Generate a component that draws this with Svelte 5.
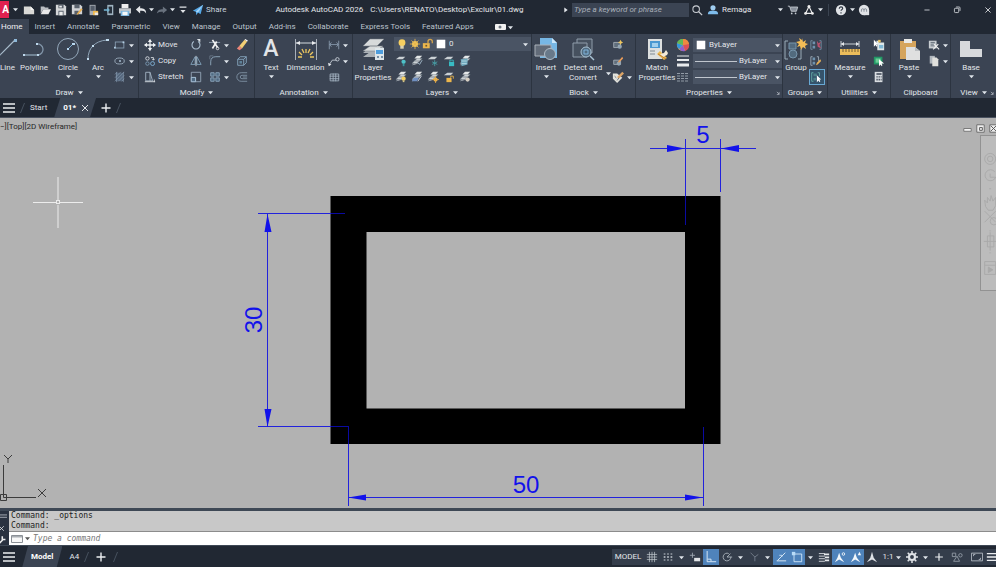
<script lang="ts">
  // Main window: title bar, ribbon, document tabs, drawing area,
  // command line and status bar.
  interface Tool {
    icon: string;
    name: string;
    text?: boolean;
    menu?: boolean;
    on?: boolean;
  }

  // Small glyphs live in a 14x14 box, ribbon-sized ones in 24x24.
  const small: Record<string, string> = {
    caret: '<path d="M4 5.500h6L7 9z" fill="#dfe4ea"/>',
    next: '<path d="M5 4v6l4-3z" fill="#e6e9ee"/>',
    launch: '<path d="M5 5l4 4M9 5.500v4H5" stroke="#d5dae1" fill="none"/>',
    new: '<path d="M1 3h8l4 4v5H1z" fill="#d9d9d6"/><path d="M9 3v4h4" fill="#f5f5f5"/>',
    open: '<path d="M2 3h4l1 1h4v2H5l-3 5z" fill="#b9bdc2"/><path d="M5 6h9l-3 6H2z" fill="#e9e9e9"/>',
    save: '<path d="M1 1h10l2 2v10H1z" fill="#d5d7d9"/><path d="M4 1h6v4H4zM4 8h6v5H4z" fill="#59616c"/><path d="M5 9h4v4H5zM5 2h3v2H5z" fill="#eceded"/>',
    saveas: '<path d="M1 1h10l2 2v9H1z" fill="#d0d2d5"/><path d="M4 1h6v4H4zM4 8h5v4H4z" fill="#59616c"/><path d="M7 11l5-6 1.500 1.500-5 5.500-2 .5z" fill="#e8ad4d"/>',
    web: '<path d="M3 1h7v12H3z" fill="#a8adb4"/><path d="M4 2h5v6H4z" fill="#535c69"/><path d="M7 8h6v5H7z" fill="#edb84f"/><path d="M9 10h4v3H9z" fill="#e7e7e7"/>',
    mobile: '<path d="M5 1h7v12H5z" fill="#9eb2c0"/><path d="M6.500 3h4v8h-4z" fill="#26303c"/><path d="M1 6h4V4l3 3-3 3V8H1z" fill="#74b4d2"/>',
    print: '<path d="M3 0h8v5H3z" fill="#eee"/><path d="M0 5h14v6H0z" fill="#c2c6ca"/><path d="M2 8h10v6H2z" fill="#75b2dd"/><path d="M4 9h6v4H4z" fill="#f3f6f8"/>',
    undo: '<path d="M6 2v3c4 0 7 1 7 6-2-3-4-3-7-3v3L1 6.500z" fill="#e5e7ea"/>',
    redo: '<path d="M8 3v3C4 6 2 7 1 11c2-2 4-2 7-2v2l5-4z" fill="#69727e"/>',
    custom: '<path d="M3 3h8v1.500H3zM4 7h6l-3 3.500z" fill="#e1e4e8"/>',
    share: '<path d="M1 8l12-7-3 11-3-2-2 3-.5-4z" fill="#56a9e8"/><path d="M4.500 9L13 1 7 10z" fill="#a9d6f8"/>',
    search: '<circle cx="6" cy="6" r="3.800" fill="none" stroke="#c9cdd3" stroke-width="1.200"/><path d="M9 9l4 4" stroke="#c9cdd3" stroke-width="1.500"/>',
    user: '<circle cx="7" cy="4.500" r="3" fill="#9fcdf0"/><path d="M1 12c0-3 2-4 4-4h4c2 0 4 1 4 4z" fill="#7ebcec"/>',
    cart: '<path d="M1 2.500h2l2 6h6l1.500-5H4" fill="#868e99" stroke="#c5cad1"/><circle cx="5.500" cy="11" r="1" fill="#c5cad1"/><circle cx="10" cy="11" r="1" fill="#c5cad1"/>',
    autodesk: '<path d="M7 3L3 11h8z" fill="none" stroke="#eee" stroke-width="1.300"/><g fill="#eee"><circle cx="7" cy="3" r="1.800"/><circle cx="3" cy="11" r="1.600"/><circle cx="11" cy="11" r="1.600"/></g>',
    help: '<circle cx="7" cy="7" r="6" fill="#dfe2e6"/><path d="M5 5.500c0-3 4-2.500 4-.5 0 1.500-2 1.500-2 3M7 9.500V11" fill="none" stroke="#29313d" stroke-width="1.300"/>',
    assist: '<circle cx="7" cy="7" r="6" fill="#dfe2e6"/><path d="M7 7h6v6H7z" fill="#dfe2e6"/><path d="M4 9V7a1.500 1.500 0 0 1 3 0v2M7 7a1.500 1.500 0 0 1 3 0v2" fill="none" stroke="#7b838e"/>',
    min: '<path d="M4 7h6" stroke="#d6d9de"/>',
    restore: '<rect x="4" y="5" width="5" height="5" rx="1" fill="none" stroke="#d6d9de"/><path d="M6 3.500h3.500a1 1 0 0 1 1 1V8" fill="none" stroke="#d6d9de"/>',
    close: '<path d="M4 4l6 6M10 4l-6 6" stroke="#e3e5e8"/>',
    burger: '<path d="M1 3h12M1 7h12M1 11h12" stroke="#eceef1" stroke-width="1.500"/>',
    plus: '<path d="M7 2.500v9M2.500 7h9" stroke="#eceef1" stroke-width="1.400"/>',
    rect: '<rect x="1.500" y="3.500" width="10" height="7" fill="none" stroke="#8ba0b5"/><g fill="#b3cee4"><path d="M0 9h2v2H0zM10 3h2v2h-2z"/></g>',
    ellipse: '<ellipse cx="6.500" cy="7" rx="5.500" ry="3.500" fill="none" stroke="#a2b3c3"/><path d="M6 6h2v2H6z" fill="#bbd2e6"/>',
    hatch: '<path d="M2 2h9v10H2z" fill="#55677d"/><path d="M1 4L4 1M1 8l7-7M1 12L12 1M5 12l7-7M9 12l3-3M3 1v12M11 1v12" stroke="#91a4b8" stroke-width=".6"/>',
    move: '<path d="M7 1v12M1 7h12" stroke="#eceff2" stroke-width="1.500"/><path d="M4.500 3.500L7 0l2.500 3.500zM4.500 10.500L7 14l2.500-3.500zM3.500 4.500L0 7l3.500 2.500zM10.500 4.500L14 7l-3.500 2.500z" fill="#eceff2"/>',
    copy: '<g fill="none"><circle cx="4" cy="4" r="2" stroke="#dce1e6"/><circle cx="4" cy="10" r="2" stroke="#7c9db8"/><circle cx="10" cy="10" r="2.300" stroke="#82b4d9"/><path d="M8 3h3v3M9.500 4.500L11 6l1.500-1.500" stroke="#dce1e6"/></g>',
    stretch: '<path d="M2 1.500h5v10H2zM7 1.500l3 10H7" fill="none" stroke="#a9b9c9"/><path d="M1 12.500h12M12 10v3" stroke="#dce2e8"/>',
    rotate: '<path d="M9.500 3a4.700 4.700 0 1 1-5 0" fill="none" stroke="#a9bccd" stroke-width="1.300"/><path d="M8 0h4v4z" fill="#d9dee3"/>',
    mirror: '<path d="M6 2v9H1zM8 2v9h5z" fill="none" stroke="#83a5bf"/><path d="M7 1v12" stroke="#cad4dd"/>',
    scale: '<path d="M1.500 1.500h11v11h-11zM1.500 7.500h5v5" fill="none" stroke="#98aabc"/><path d="M1.500 7.500h5v5h-5z" fill="#4f6a83" stroke="#abc5da"/>',
    trim: '<path d="M0 4h13" stroke="#98a7b6"/><path d="M4 1l6 9M9 3L4 11" stroke="#f1f1f1" stroke-width="2"/><circle cx="10" cy="11" r="1.500" fill="none" stroke="#f1f1f1"/>',
    fillet: '<path d="M2 12V8c0-4 2-6 6-6h5" fill="none" stroke="#94afc5"/><path d="M1 1h4M1 1v4" stroke="#697889"/>',
    array: '<path d="M2 2h4v4H2zM8 2h4v4H8zM2 8h4v4H2zM8 8h4v4H8z" fill="#506a82" stroke="#8faac0"/>',
    erase: '<path d="M1 11l3 2 3-2-3-3z" fill="#ec8579"/><path d="M4 8l6-7 3 2-6 8z" fill="#f3cf74"/><path d="M10 1l1-1 3 2-1 1z" fill="#fff"/>',
    explode: '<path d="M2 5h7v7H2zM5 2h7v7" fill="none" stroke="#8aabc5"/><path d="M2 5l3-3M9 5l3-3M9 12l3-3" stroke="#8aabc5"/><path d="M4 7h3v3H4z" fill="#5f8299"/>',
    offset: '<path d="M13 2H6a5 5 0 0 0 0 10h7M13 5H7a2 2 0 0 0 0 4h6M13 7H8" fill="none" stroke="#8396a9"/>',
    linear: '<path d="M1.500 2v10M12.500 2v10M2 6.500h10M4 4L2 6.500 4 9M10 4l2 2.500L10 9" fill="none" stroke="#8a9caf"/>',
    leader: '<path d="M1 12l4-6h5" fill="none" stroke="#cbd3dc"/><circle cx="11" cy="5" r="2" fill="none" stroke="#cbd3dc"/><path d="M0 9l1 4 3-2z" fill="#e2e6ea"/>',
    table: '<path d="M2.500 3.500h10v8h-10zM2 6h11M2 9h11M6 3v9M9 3v9" fill="none" stroke="#a4b3c2"/>',
    bulb: '<circle cx="7" cy="5.500" r="4" fill="#f6cf60"/><path d="M5 9h4v3.500H5z" fill="#ddd3b0"/>',
    sun: '<circle cx="7" cy="7" r="3.500" fill="#f7cb5b"/><path d="M7 1v12M1 7h12M3 3l8 8M11 3l-8 8" stroke="#e5b54e"/>',
    lock: '<path d="M1 6h8v6H1z" fill="#ebb64d"/><path d="M7 6V4a2.500 2.500 0 0 1 5 0v2" fill="none" stroke="#d7a44b" stroke-width="1.500"/><path d="M4 8h2v2H4z" fill="#6b5630"/>',
    white: '<path d="M2 2h10v10H2z" fill="#fff"/>',
    insertEdit: '<path d="M2 4h8v6H2z" fill="#606e7c" stroke="#a6afb8"/><circle cx="9" cy="9" r="2.500" fill="#93a5b3"/><path d="M10 1l1 2 2 1-2 1-1 2-1-2-2-1 2-1z" fill="#eec55e"/>',
    blockEdit: '<path d="M2 6h8v5H2z" fill="#606e7c" stroke="#a6afb8"/><circle cx="8" cy="10" r="2.500" fill="#93a5b3"/><path d="M7 8l5-6 1 2-5 5z" fill="#ed9d58"/>',
    attrib: '<path d="M1 3h5l6 5-6 6-5-5z" fill="#e2e2dc"/><path d="M6 7l6-6 2 2-6 6z" fill="#dca466"/><path d="M3 6l2 2M8 8l-2 3" stroke="#5c6570"/>',
    wheel: '<circle cx="7" cy="7" r="6" fill="#e7b63c"/><path d="M7 7V1a6 6 0 0 1 6 5z" fill="#ee8841"/><path d="M7 7l6-1a6 6 0 0 1-4 7z" fill="#dc4e57"/><path d="M7 7l2 6a6 6 0 0 1-6-2z" fill="#8f60cc"/><path d="M7 7l-4 4a6 6 0 0 1-2-6z" fill="#3597dc"/><path d="M7 7L1 5a6 6 0 0 1 6-4z" fill="#62b657"/>',
    weight: '<path d="M1 2h12" stroke="#e9ebed"/><path d="M1 6h12" stroke="#e9ebed" stroke-width="2"/><path d="M1 11h12" stroke="#e9ebed" stroke-width="3"/>',
    ltype: '<path d="M1 3.500h12M1 6h12M1 8.500h12M1 11h12" stroke="#929ba6" stroke-dasharray="3 1"/>',
    ungroup: '<path d="M3 2H1v10h2M11 2h2v10h-2" fill="none" stroke="#7994a9"/><path d="M3 3h3v3H3zM3 8h3v3H3z" fill="#6f92ad"/><path d="M8 2l2 3 3-2-2 4 2 4-4-2z" fill="#b9526f"/>',
    groupEdit: '<path d="M3 2H1v10h2M8 2h2v5" fill="none" stroke="#a5b2be"/><path d="M3 3h3v3H3zM3 8h3v3H3z" fill="#6f92ad"/><path d="M7 12l1-3 4-4 1 2-4 4z" fill="#e5af58"/>',
    groupSel: '<path d="M4 2H2v10h2M9 2h2v4" fill="none" stroke="#68b3aa"/><path d="M4 3h4v3H4zM4 8h3v3H4z" fill="#4d8287"/><path d="M8 5v8l2-2 1 2 1-1-1-2h2z" fill="#fff"/>',
    pick: '<path d="M4 2h3v2h6v9H5V6H4z" fill="#dfe8e9"/><path d="M7 7h5v4H7z" fill="#80b8d5"/><path d="M1 1v8l2-2 1 2 1-1-1-2h2z" fill="#fff"/><path d="M6 1h3v3H6z" fill="#e8c463"/>',
    selectAll: '<path d="M1 2h10v9H1z" fill="#239866"/><path d="M3 4h6v5H3z" fill="#6acc96"/><path d="M7 5v8l2-2 1 2 1-1-1-2h3z" fill="#fff"/>',
    calc: '<path d="M2 1h9v12H2z" fill="#d9dde1"/><path d="M4 2.500h6v2H4zM4 6h1.500v1.500H4zM6.500 6H8v1.500H6.500zM9 6h1v1.500H9zM4 9h1.500v2H4zM6.500 9H8v2H6.500zM9 9h1v2H9z" fill="#3d4654"/>',
    cut: '<path d="M1 2h9v9H1z" fill="#c9ced2"/><path d="M3 4h5M3 6h5M3 8h5" stroke="#59636f"/><path d="M7 6l6 6M12 6l-6 6" stroke="#f2f2f2" stroke-width="1.300"/>',
    copyclip: '<path d="M2 1h6v9H2z" fill="#aeb5bc"/><path d="M5 3h5l2 2v8H5z" fill="#e0e0dd"/>',
    grid: '<path d="M4 1v12M7 1v12M10 1v12M1 4h12M1 7h12M1 10h12" stroke="#c8ced5" stroke-width=".8"/>',
    snap: '<g fill="#c8ced5"><path d="M2 3h2v1H2zM6 3h2v1H6zM10 3h2v1h-2zM2 6h2v2H2zM6 6h2v2H6zM10 6h2v2h-2zM2 10h2v1H2zM6 10h2v1H6zM10 10h2v1h-2z"/></g>',
    dyn: '<path d="M4 2v6M1 5h6" stroke="#a2abb5"/><path d="M6 8h7v4H6z" fill="#e1e4e7"/>',
    ortho: '<path d="M2.500 0v12.500H13M3 9.500h4V12" fill="none" stroke="#e9f3fb"/>',
    polar: '<path d="M11.500 7A4.500 4.500 0 1 1 9 3M7 7h6M7 7l4-4" fill="none" stroke="#aeb6bf"/>',
    iso: '<path d="M3 2l5 5v5M8 7l4-3" fill="none" stroke="#78828f"/>',
    track: '<path d="M2 11.500h11M3 11l9-9" stroke="#eef6fc" fill="none"/><path d="M5 5h3v2" stroke="#d0e4f5" fill="none"/>',
    osnap: '<path d="M3.500 3.500h9v9h-9z" fill="none" stroke="#d8ebfa"/><path d="M1 1h4v4H1z" fill="#b9dcf8"/>',
    lwt: '<path d="M1 3h7M1 6h7M1 9h7M1 12h7" stroke="#e4e7ea"/><path d="M7 4h6M8 7.500h5M8 11h5" stroke="#e4e7ea" stroke-width="2"/>',
    ann: '<path d="M7 1l2 7 4 5-6-3-6 3 4-5z" fill="#dfe2e6"/>',
    annVis: '<path d="M6 2l2 6 4 5-6-3-5 3 3-5z" fill="#f3f8fc"/><circle cx="11" cy="3.500" r="1.500" fill="none" stroke="#f3f8fc"/>',
    annAuto: '<path d="M6 2l2 6 4 5-6-3-5 3 3-5z" fill="#f3f8fc"/><path d="M11 1l-2 4h4z" fill="#f3f8fc"/>',
    gear: '<circle cx="7" cy="7" r="3.500" fill="none" stroke="#e0e3e7" stroke-width="2.500"/><path d="M7 0v3M7 11v3M0 7h3M11 7h3M2 2l2 2M10 10l2 2M12 2l-2 2M2 12l2-2" stroke="#e0e3e7" stroke-width="1.800"/>',
    isolate: '<path d="M1.500 2.500h4v4h-4zM7 6l-4 6h7z" fill="none" stroke="#969faa"/><circle cx="11" cy="5" r="2" fill="none" stroke="#969faa"/>',
    clean: '<path d="M.5 2.500h13v9H.5zM3 6V4h2M11 8v2H9" fill="none" stroke="#bac1c9"/>',
    prompt: '<path d="M.5 3.500h11v7H.5z" fill="#f8f8f8" stroke="#8b9096"/><path d="M1 4h10v1.500H1z" fill="#a8adb2"/>',
    grip: '<path d="M0 5h14M0 8h14" stroke="#c2c7ce"/>',
    wrench: '<path d="M3 13l6-6M8 3v4h4" fill="none" stroke="#eee" stroke-width="2"/>',
    media: '<rect x="1" y="4" width="11" height="6" rx="1" fill="#f2f2f2"/><circle cx="6" cy="7" r="1.500" fill="#6e7681"/>',
    vpMin: '<path d="M3 7h8v3H3z" fill="#f2f2f2" stroke="#747474"/>',
    vpMax: '<path d="M3 3h8v8H3z" fill="#eee" stroke="#686868"/><path d="M6 6h3v3H6z" fill="none" stroke="#555"/>',
    vpClose: '<path d="M3 3h8v8H3z" fill="#eee" stroke="#686868"/><path d="M4 4l6 6M10 4l-6 6" stroke="#555"/>'
  };

  // Layer tools share the sheet stack and differ in their badge.
  const sheets =
    '<path d="M4 7l3-3h6l-3 3zM1 10l3-3h6l-3 3zM1 12l3-2h5" fill="#cbd1d5" stroke="#727d87" stroke-width=".5"/><path d="M4 4l3-3h6l-3 3z" fill="#e4e7e8"/>';
  const sheet = '<path d="M1 5l4-3h7L9 5z" fill="#cbd1d5"/>';
  small.layoff = sheet + '<circle cx="10" cy="8" r="2.500" fill="#4fc1c8"/><path d="M9 10h2v3H9z" fill="#3a929b"/>';
  small.laycur = sheets + '<path d="M8 9l2 2 3-5" fill="none" stroke="#abc2d3"/>';
  small.layfrz = sheet + '<path d="M9 6v7M6 8l6 3M12 8l-6 3" stroke="#499fa7"/>';
  small.laylck = sheet + '<path d="M7 8h6v5H7z" fill="#38bbc3"/><path d="M8 8V6h4v2" fill="none" stroke="#38bbc3"/>';
  small.laymch = sheets + '<path d="M2 5l8-1v7l-7 2z" fill="#71a9bd"/><path d="M3 7h6M3 10h6" stroke="#b9dbe5"/>';
  small.layon = sheets + '<circle cx="10" cy="9" r="2.500" fill="#f3cf62"/><path d="M9 11h2v2H9z" fill="#d4c489"/>';
  small.layiso = sheets + '<path d="M3 8h6l-2 4H1z" fill="#6f8fc1"/><path d="M8 12l4-6" stroke="#dce3ef"/>';
  small.laythw = sheets + '<circle cx="10" cy="10" r="2.500" fill="#efb84e"/><path d="M10 6v8M6 10h8" stroke="#e7aa46"/>';
  small.layulk = sheet + '<path d="M4 8h6v5H4z" fill="#ecb64c"/><path d="M9 8V6h3v3" fill="none" stroke="#ecb64c"/>';
  small.laywlk = sheets + '<circle cx="10" cy="10" r="2.500" fill="#d6cfc3"/>';

  const large: Record<string, string> = {
    line: '<path d="M2 20L19 3" stroke="#a9bdcd" stroke-width="1.200"/><path d="M18 2h3v3h-3zM0 19h3v3H0z" fill="#8fb8d8"/>',
    pline: '<path d="M2 18h14a5.500 5.500 0 0 0-1-11" fill="none" stroke="#8296a9" stroke-width="1.300"/><path d="M1 17h2v2H1zM15 17h2v2h-2zM14 6h2v2h-2z" fill="#bed8ec"/>',
    circle: '<circle cx="12" cy="12" r="10.500" fill="none" stroke="#93a7ba"/><path d="M12 12l6-6" stroke="#7db1d8"/><path d="M11 11h2v2h-2zM16 6h3v2h-3z" fill="#b9d9f1"/>',
    arc: '<path d="M2 22C2 12 8 4 21 3" fill="none" stroke="#8fa4b7"/><path d="M1 21h2v2H1zM6 8h2v2H6zM20 2h3v2h-3z" fill="#c3ddef"/>',
    dim: '<path d="M1.500 2v21M22.500 2v21" stroke="#a8b0ba"/><path d="M2 6h20" stroke="#d6dbe0"/><path d="M2 6l4-2v4zM22 6l-4-2v4z" fill="#e9ebed"/><path d="M12 12v4M5 15l3 3M19 15l-3 3M8 12l2 4M16 12l-2 4M4 20h4M20 20h-4" stroke="#edc75f" stroke-width="1.300"/>',
    layers: '<path d="M2 20l7-5h14l-7 5zM2 16l7-6h14l-7 6z" fill="#aab0b5"/><path d="M2 14l7-5h13l-7 5zM2 9l7-7h14l-7 7z" fill="#d7dadb" stroke="#707881" stroke-width=".5"/><path d="M14 11h9v12h-9z" fill="#dde6eb"/><path d="M15 13h7v4h-7z" fill="#4d9ddd"/><path d="M16 19h2v2h-2zM20 19h2v2h-2z" fill="#758ea4"/>',
    insert: '<path d="M6 1h12l5 5v15H6z" fill="#77b7e5"/><path d="M18 1v5h5" fill="#cbe7fb"/><path d="M1 8h16v11H1z" fill="#626b78" stroke="#aab1b9"/><circle cx="16" cy="17" r="5.500" fill="#68798a" stroke="#b1bcc6"/>',
    detect: '<path d="M6 2h15v14H6z" fill="#46515f" stroke="#8f9dab"/><path d="M2 6h14v14H2z" fill="#46515f" stroke="#8f9dab"/><circle cx="15" cy="15" r="5" fill="#526c81" stroke="#a9c3d5"/><path d="M13 13h4v4h-4z" fill="none" stroke="#7fb2da"/><path d="M19 19l4 4" stroke="#a9c3d5" stroke-width="1.500"/>',
    match: '<path d="M3 2h14v20H3z" fill="#dde0e0"/><path d="M5 4h10v7H5z" fill="#4b98d1"/><path d="M7 6h6v4H7z" fill="#a3d0ed"/><path d="M5 14h5M5 17h5" stroke="#7f8992"/><path d="M12 17l3-3 7 7-3 2z" fill="#eeb94d"/><path d="M15 17l4-1 2-3 2 3-1 2-4 2z" fill="#f3ead8"/><path d="M13 17l8 5" stroke="#bf813a"/>',
    group: '<path d="M4 4H1v18h3M14 22h3V12" fill="none" stroke="#9aabb8"/><path d="M5 6h7v6H5z" fill="#526a7e" stroke="#7795ac"/><circle cx="9" cy="17" r="4" fill="#526a7e" stroke="#7795ac"/><path d="M18 1l1 4 3-2-1 3 3 1-3 2 1 3-3-2-2 3-1-4-3 1 2-3-3-2 4-1-1-3 3 2z" fill="#f4bd56"/>',
    measure: '<path d="M3 7h18M3 4v6M21 4v6" stroke="#cbd1d7"/><path d="M3 7l3-2v4zM21 7l-3-2v4z" fill="#e5e9ec"/><path d="M2 12h20v6H2z" fill="#ebbd5b"/><path d="M5 12v3M8 12v3M11 12v3M14 12v3M17 12v3M20 12v3" stroke="#775f32"/>',
    paste: '<path d="M3 4h16v18H3z" fill="#d5a45c"/><path d="M7 2h8v4H7z" fill="#e9e9e7"/><path d="M9 10h9l5 4v9H9z" fill="#dfe0e0"/><path d="M18 10v4h5" fill="#b9bdc0"/>',
    base: '<path d="M1 4h10v8h12v8H1z" fill="#d7d9dc"/>'
  };

  const quick: Tool[] = [
    { icon: 'new', name: 'New' },
    { icon: 'open', name: 'Open' },
    { icon: 'save', name: 'Save' },
    { icon: 'saveas', name: 'Save As' },
    { icon: 'web', name: 'Open from Web' },
    { icon: 'mobile', name: 'Save to Web' },
    { icon: 'print', name: 'Plot' },
    { icon: 'undo', name: 'Undo', menu: true },
    { icon: 'redo', name: 'Redo', menu: true }
  ];

  const ribbonTabs = [
    'Home', 'Insert', 'Annotate', 'Parametric', 'View', 'Manage',
    'Output', 'Add-ins', 'Collaborate', 'Express Tools', 'Featured Apps'
  ];

  const drawTools: Tool[] = [
    { icon: 'rect', name: 'Rectangle', menu: true },
    { icon: 'ellipse', name: 'Ellipse', menu: true },
    { icon: 'hatch', name: 'Hatch', menu: true }
  ];
  const modifyTools: Tool[][] = [
    [
      { icon: 'move', name: 'Move', text: true },
      { icon: 'copy', name: 'Copy', text: true },
      { icon: 'stretch', name: 'Stretch', text: true }
    ],
    [
      { icon: 'rotate', name: 'Rotate' },
      { icon: 'mirror', name: 'Mirror' },
      { icon: 'scale', name: 'Scale' }
    ],
    [
      { icon: 'trim', name: 'Trim', menu: true },
      { icon: 'fillet', name: 'Fillet', menu: true },
      { icon: 'array', name: 'Array', menu: true }
    ],
    [
      { icon: 'erase', name: 'Erase' },
      { icon: 'explode', name: 'Explode' },
      { icon: 'offset', name: 'Offset' }
    ]
  ];
  const annotationTools: Tool[] = [
    { icon: 'linear', name: 'Linear', menu: true },
    { icon: 'leader', name: 'Leader', menu: true },
    { icon: 'table', name: 'Table' }
  ];
  const layerTools = [
    'layoff', 'laycur', 'layfrz', 'laylck', 'laymch',
    'layon', 'layiso', 'laythw', 'layulk', 'laywlk'
  ];
  const blockTools: Tool[] = [
    { icon: 'insertEdit', name: 'Create block' },
    { icon: 'blockEdit', name: 'Edit block' },
    { icon: 'attrib', name: 'Edit attributes', menu: true }
  ];
  const groupTools: Tool[] = [
    { icon: 'ungroup', name: 'Ungroup' },
    { icon: 'groupEdit', name: 'Group edit' },
    { icon: 'groupSel', name: 'Group selection', on: true }
  ];
  const utilityTools: Tool[] = [
    { icon: 'pick', name: 'Quick select' },
    { icon: 'selectAll', name: 'Select all' },
    { icon: 'calc', name: 'Calculator' }
  ];
  const clipTools: Tool[] = [
    { icon: 'cut', name: 'Cut', menu: true },
    { icon: 'copyclip', name: 'Copy clip', menu: true }
  ];

  const statusTools: Tool[] = [
    { icon: 'grid', name: 'Grid' },
    { icon: 'snap', name: 'Snap', menu: true },
    { icon: 'dyn', name: 'Dynamic input' },
    { icon: 'ortho', name: 'Ortho', on: true },
    { icon: 'polar', name: 'Polar tracking', menu: true },
    { icon: 'iso', name: 'Isometric drafting', menu: true },
    { icon: 'track', name: 'Object snap tracking', on: true },
    { icon: 'osnap', name: 'Object snap', on: true, menu: true },
    { icon: 'lwt', name: 'Lineweight' },
    { icon: 'annVis', name: 'Annotation visibility', on: true },
    { icon: 'annAuto', name: 'Auto scale', on: true },
    { icon: 'ann', name: 'Annotation scale' }
  ];

  let activeTab = $state('Home');
  let command = $state('');
</script>

{#snippet ico(name: string)}
  <svg class="ico" viewBox="0 0 14 14" aria-hidden="true">{@html small[name]}</svg>
{/snippet}

{#snippet caret()}
  <svg class="caret" viewBox="4 4 6 6" aria-hidden="true">{@html small.caret}</svg>
{/snippet}

{#snippet big(name: string, lines: string[], menu: boolean)}
  <button type="button" class="big">
    {#if name === 'text'}
      <span class="letter">A</span>
    {:else}
      <svg class="bigico" viewBox="0 0 24 24" aria-hidden="true">{@html large[name]}</svg>
    {/if}
    {#each lines as l}<span>{l}</span>{/each}
    {#if menu}{@render caret()}{/if}
  </button>
{/snippet}

{#snippet stack(tools: Tool[])}
  <div class="stack">
    {#each tools as t}
      <button type="button" class="tool" class:on={t.on} aria-label={t.name}>
        {@render ico(t.icon)}
        {#if t.text}<span>{t.name}</span>{/if}
        {#if t.menu}{@render caret()}{/if}
      </button>
    {/each}
  </div>
{/snippet}

{#snippet caption(text: string, menu: boolean, launch: boolean)}
  <footer class="caption">
    <span>{text}</span>
    {#if menu}{@render caret()}{/if}
    {#if launch}<span class="launch">{@render ico('launch')}</span>{/if}
  </footer>
{/snippet}

<div class="app">
  <header class="titlebar">
    <button type="button" class="logo">A</button>
    <button type="button" class="drop" aria-label="Application menu">{@render caret()}</button>
    <div class="quick">
      {#each quick as q}
        <button type="button" class="tb" aria-label={q.name}>{@render ico(q.icon)}</button>
        {#if q.menu}{@render caret()}{/if}
      {/each}
      <button type="button" class="tb" aria-label="Customize">{@render ico('custom')}</button>
    </div>
    <button type="button" class="share">{@render ico('share')}<span>Share</span></button>
    <h1><span>Autodesk AutoCAD 2026</span><span>C:\Users\RENATO\Desktop\Excluir\01.dwg</span></h1>
    <div class="account">
      {@render ico('next')}
      <input type="search" aria-label="Search help" placeholder="Type a keyword or phrase" />
      <button type="button" class="tb" aria-label="Search">{@render ico('search')}</button>
      <button type="button" class="user">{@render ico('user')}<span>Remaga</span>{@render caret()}</button>
      <button type="button" class="tb" aria-label="Store">{@render ico('cart')}</button>
      <button type="button" class="tb" aria-label="Autodesk apps">{@render ico('autodesk')}</button>
      {@render caret()}
      <i class="rule"></i>
      <button type="button" class="tb" aria-label="Help">{@render ico('help')}</button>
      {@render caret()}
      <button type="button" class="tb" aria-label="Assistant">{@render ico('assist')}</button>
    </div>
    <div class="window">
      <button type="button" aria-label="Minimize">{@render ico('min')}</button>
      <button type="button" aria-label="Restore">{@render ico('restore')}</button>
      <button type="button" aria-label="Close">{@render ico('close')}</button>
    </div>
  </header>

  <nav class="tabs">
    {#each ribbonTabs as tab}
      <button type="button" class:active={activeTab === tab} onclick={() => (activeTab = tab)}>{tab}</button>
    {/each}
    <button type="button" class="display" aria-label="Ribbon display">{@render ico('media')}{@render caret()}</button>
  </nav>

  <main class="ribbon">
    <section class="panel draw">
      <div class="tools">
        {@render big('line', ['Line'], false)}
        {@render big('pline', ['Polyline'], false)}
        {@render big('circle', ['Circle'], true)}
        {@render big('arc', ['Arc'], true)}
        {@render stack(drawTools)}
      </div>
      {@render caption('Draw', true, false)}
    </section>
    <section class="panel modify">
      <div class="tools">
        {#each modifyTools as col}{@render stack(col)}{/each}
      </div>
      {@render caption('Modify', true, false)}
    </section>
    <section class="panel annotation">
      <div class="tools">
        {@render big('text', ['Text'], true)}
        {@render big('dim', ['Dimension'], false)}
        {@render stack(annotationTools)}
      </div>
      {@render caption('Annotation', true, false)}
    </section>
    <section class="panel layer">
      <div class="tools">
        {@render big('layers', ['Layer', 'Properties'], false)}
        <div class="layerbox">
          <label class="combo">
            {@render ico('bulb')}{@render ico('sun')}{@render ico('lock')}{@render ico('white')}
            <select aria-label="Current layer"><option>0</option></select>
            {@render caret()}
          </label>
          <div class="layergrid">
            {#each layerTools as t}
              <button type="button" class="tool" aria-label={t}>{@render ico(t)}</button>
            {/each}
          </div>
        </div>
      </div>
      {@render caption('Layers', true, false)}
    </section>
    <section class="panel block">
      <div class="tools">
        {@render big('insert', ['Insert'], true)}
        {@render big('detect', ['Detect and', 'Convert'], false)}
        <span class="side">{@render caret()}</span>
        {@render stack(blockTools)}
      </div>
      {@render caption('Block', true, false)}
    </section>
    <section class="panel props">
      <div class="tools">
        {@render big('match', ['Match', 'Properties'], false)}
        <div class="rows">
          {#each ['wheel', 'weight', 'ltype'] as kind}
            <div class="row">
              {@render ico(kind)}
              <label class="combo">
                {#if kind === 'wheel'}{@render ico('white')}{:else}<i class="sample"></i>{/if}
                <select class={kind} aria-label={kind}><option>ByLayer</option></select>
                {@render caret()}
              </label>
            </div>
          {/each}
        </div>
      </div>
      {@render caption('Properties', true, true)}
    </section>
    <section class="panel groups">
      <div class="tools">
        {@render big('group', ['Group'], false)}
        {@render stack(groupTools)}
      </div>
      {@render caption('Groups', true, false)}
    </section>
    <section class="panel utilities">
      <div class="tools">
        {@render big('measure', ['Measure'], true)}
        {@render stack(utilityTools)}
      </div>
      {@render caption('Utilities', true, false)}
    </section>
    <section class="panel clipboard">
      <div class="tools">
        {@render big('paste', ['Paste'], true)}
        {@render stack(clipTools)}
      </div>
      {@render caption('Clipboard', false, false)}
    </section>
    <section class="panel view">
      <div class="tools">{@render big('base', ['Base'], true)}</div>
      {@render caption('View', true, true)}
    </section>
  </main>

  <nav class="files">
    <button type="button" class="menu" aria-label="Drawings menu">{@render ico('burger')}</button>
    <i class="slash"></i>
    <button type="button">Start</button>
    <button type="button" class="current"><span>01*</span>{@render ico('close')}</button>
    <button type="button" class="add" aria-label="New drawing">{@render ico('plus')}</button>
    <i class="slash"></i>
  </nav>

  <section class="canvas">
    <!-- drawing units are the viewport's own pixels, y starting below the tabs -->
    <svg class="model" viewBox="0 118 996 390" role="img" aria-label="Frame, 50 by 30, wall 5">
      <path d="M330.500 196h390v248h-390zM366.500 232v176.500H685V232z" fill="#000" fill-rule="evenodd" />
      <g stroke="#2222dc" fill="none">
        <path d="M267.500 214v213M258 213.500h73M258 426.500h73" />
        <path d="M349 497.500h354M348.500 444v62M703.500 444v62" />
        <path d="M650 148.500h106M685.500 139v57M720.500 139v53" />
      </g>
      <g stroke="#0a0aa0" fill="none">
        <path d="M331 213.500h14M331 426.500h18M348.500 427v17M703.500 427v17" />
        <path d="M685.500 196v29" />
      </g>
      <g fill="#1212ea">
        <path d="M267.500 214l-3 18h7zM267.500 427l-3-18h7z" />
        <path d="M348 497.500l18-3v6zM703 497.500l-18-3v6z" />
        <path d="M685 148.500l-18-3.500v7zM721 148.500l18-3.500v7z" />
        <text x="526" y="493" text-anchor="middle">50</text>
        <text x="703" y="143" text-anchor="middle">5</text>
        <text transform="translate(262 320) rotate(-90)" text-anchor="middle">30</text>
      </g>
      <g stroke="#ececec" fill="none">
        <path d="M33 202.500h23M60 202.500h23M58 177v23M58 205v23" />
        <rect x="56.500" y="200.500" width="3" height="3" />
      </g>
      <g class="ucs" stroke="#3c3c3c" fill="none">
        <path d="M3.500 465v32.500H36M.5 494.500h6v6h-6z" />
        <path d="M4 455l4 4 4-4M8 459v4M38 489l8 8M46 489l-8 8" />
      </g>
    </svg>
    <div class="vplabel">−][Top][2D Wireframe]</div>
    <div class="vpbuttons">
      <button type="button" aria-label="Minimize viewport">{@render ico('vpMin')}</button>
      <button type="button" aria-label="Maximize viewport">{@render ico('vpMax')}</button>
      <button type="button" aria-label="Close viewport">{@render ico('vpClose')}</button>
    </div>
    <div class="navbar">
      <svg viewBox="0 0 24 154" aria-hidden="true" fill="none" stroke="#a9a9a9">
        <circle cx="10" cy="18" r="6" /><circle cx="10" cy="18" r="3" />
        <path d="M15 32a6 6 0 1 0 1 6h-6v-4" />
        <path d="M10 50v1M10 96v1M10 120v1" stroke-width="2" />
        <path d="M5 70l-1-7 3 3v-6l3 4 1-6 2 6 3-4v9l-3 5H8zM4 75l12 12M4 87l12-12" />
        <circle cx="14" cy="86" r="4" />
        <path d="M10 98v20M3 108h14M7 102h7v12H7zM4 130h12v14H4zM4 134h12" />
        <path d="M8 136l5 3-5 3z" fill="#a9a9a9" />
      </svg>
    </div>
  </section>

  <section class="command">
    <div class="handle">
      {@render ico('grip')}{@render ico('close')}{@render ico('wrench')}
    </div>
    <div class="console">
      <div class="history"><p>Command: _options</p><p>Command:</p></div>
      <label class="entry">
        {@render ico('prompt')}
        <svg class="caret" viewBox="4 4 6 6" aria-hidden="true"><path d="M4 5.500h6L7 9z" fill="#555" /></svg>
        <input type="text" aria-label="Command" placeholder="Type a command" bind:value={command} />
      </label>
    </div>
  </section>

  <footer class="status">
    <nav class="layouts">
      <button type="button" class="menu" aria-label="Layouts menu">{@render ico('burger')}</button>
      <button type="button" class="current"><span>Model</span></button>
      <button type="button">A4</button>
      <i class="slash"></i>
      <button type="button" class="add" aria-label="New layout">{@render ico('plus')}</button>
      <i class="slash"></i>
    </nav>
    <div class="modes">
      <button type="button" class="space">MODEL</button>
      {#each statusTools as s}
        <button type="button" class="mode" class:on={s.on} aria-label={s.name}>{@render ico(s.icon)}</button>
        {#if s.menu}<span class="open">{@render caret()}</span>{/if}
      {/each}
      <button type="button" class="ratio">1:1{@render caret()}</button>
      <button type="button" class="mode" aria-label="Workspace">{@render ico('gear')}</button>
      <span class="open">{@render caret()}</span>
      <button type="button" class="mode" aria-label="Monitor">{@render ico('plus')}</button>
      <button type="button" class="mode wide" aria-label="Isolate objects">{@render ico('isolate')}</button>
      <button type="button" class="mode wide" aria-label="Clean screen">{@render ico('clean')}</button>
      <button type="button" class="mode end" aria-label="Customization">{@render ico('burger')}</button>
    </div>
  </footer>
</div>

<style>
  :global(body) {
    margin: 0;
  }

  .app {
    --dark: #212833;
    --panel: #3b4453;
    --line: #2c3440;
    display: flex;
    flex-direction: column;
    min-height: 100vh;
    overflow: hidden;
    background: var(--dark);
    color: #e3e6ea;
    font: 8px/10px Roboto, 'Noto Sans', sans-serif;
  }

  button,
  input,
  select {
    margin: 0;
    padding: 0;
    border: 0;
    background: none;
    color: inherit;
    font: inherit;
  }
  button {
    display: flex;
    align-items: center;
    justify-content: center;
    white-space: nowrap;
  }
  .ico {
    flex: none;
    width: 14px;
    height: 14px;
  }
  .caret {
    flex: none;
    width: 5px;
    height: 5px;
  }

  .titlebar {
    display: flex;
    align-items: center;
    height: 19px;
  }
  .titlebar .ico {
    width: 12px;
    height: 12px;
  }
  .logo {
    width: 9px;
    height: 17px;
    justify-content: flex-end;
    background: #e0204f;
    color: #fff;
    font-size: 10px;
    font-weight: 700;
  }
  .drop {
    width: 12px;
  }
  .tb {
    width: 16px;
  }
  .quick {
    display: flex;
    align-items: center;
  }
  .share {
    gap: 2px;
    margin-left: 1px;
    color: #c9d4df;
  }
  .titlebar h1 {
    display: flex;
    flex: 1;
    gap: 7px;
    margin: 0;
    padding-left: 49px;
    font-size: 8px;
    font-weight: 400;
    white-space: nowrap;
  }
  .account {
    display: flex;
    align-items: center;
  }
  .account > .caret {
    margin: 0 1px;
  }
  .account input {
    width: 117px;
    height: 14px;
    box-sizing: border-box;
    padding: 0 2px;
    background: #3b4453;
  }
  .account input::placeholder {
    color: #a9b0ba;
    font-style: italic;
    opacity: 1;
  }
  .user {
    gap: 3px;
    width: 78px;
    justify-content: flex-start;
    margin-right: 2px;
    padding-left: 2px;
  }
  .user .caret {
    margin-left: auto;
  }
  .rule {
    width: 1px;
    height: 12px;
    margin: 0 4px;
    background: #3a4350;
  }
  .window {
    display: flex;
    margin-left: 40px;
  }
  .window button {
    width: 30px;
  }
  .window button:last-child {
    width: 24px;
    padding-left: 8px;
  }

  .tabs {
    display: flex;
    height: 15px;
    color: #bcc3cc;
  }
  .tabs button {
    padding: 1px 6px 0;
  }
  .tabs .active {
    padding: 1px 6px 0 1px;
    background: var(--panel);
    color: #eef0f3;
  }
  .tabs .display {
    padding-left: 14px;
  }

  .ribbon {
    display: grid;
    grid-template-columns: 139px 116px 98px 179px 104px 147px 45px 63px 60px 1fr;
    height: 64px;
    background: var(--panel);
  }
  .panel {
    display: flex;
    flex-direction: column;
    min-width: 0;
    border-right: 1px solid var(--line);
  }
  .panel:last-child {
    border-right: 0;
  }
  .tools {
    display: grid;
    justify-content: start;
    flex: 1;
    padding-top: 3px;
  }
  .draw .tools {
    grid-template-columns: 15px 38px 30px 30px 24px;
  }
  .modify .tools {
    grid-template-columns: 46px 19px 27px 16px;
    padding-left: 4px;
  }
  .annotation .tools {
    grid-template-columns: 26px 43px 24px;
    padding-left: 3px;
  }
  .layer .tools {
    grid-template-columns: 38px 1fr;
    justify-content: stretch;
    padding-left: 1px;
  }
  .block .tools {
    grid-template-columns: 28px 46px 5px 24px;
  }
  .props .tools {
    grid-template-columns: 38px 1fr;
    justify-content: stretch;
    padding-left: 2px;
  }
  .groups .tools {
    grid-template-columns: 26px 18px;
  }
  .utilities .tools {
    grid-template-columns: 44px 16px;
  }
  .clipboard .tools {
    grid-template-columns: 36px 24px;
  }
  .view .tools {
    grid-template-columns: 40px;
  }
  .big {
    flex-direction: column;
    justify-content: flex-start;
    min-width: 0;
  }
  .bigico {
    flex: none;
    width: 24px;
    height: 24px;
    margin-bottom: 2px;
  }
  .letter {
    height: 26px;
    color: #e2e4e7;
    font-size: 23px;
    font-weight: 500;
    line-height: 24px;
  }
  .big .caret {
    margin-top: 1px;
  }
  .side {
    display: flex;
    align-items: flex-end;
    padding-bottom: 11px;
  }
  .stack {
    display: grid;
    grid-template-rows: repeat(3, 16px);
  }
  .tool {
    gap: 2px;
    justify-content: flex-start;
  }
  .tool .ico {
    width: 12px;
    height: 12px;
    margin-left: 1px;
  }
  .tool .caret {
    margin-left: 1px;
  }
  .tool.on {
    width: 16px;
    outline: 1px solid #68a9d4;
    outline-offset: -1px;
    background: #35536b;
  }
  .caption {
    position: relative;
    display: flex;
    align-items: center;
    justify-content: center;
    gap: 4px;
    height: 11px;
  }
  .launch {
    position: absolute;
    right: 0;
    top: 2px;
    display: flex;
  }
  .launch .ico {
    width: 8px;
    height: 8px;
  }

  .combo {
    display: flex;
    flex: 1;
    align-items: center;
    gap: 1px;
    min-width: 0;
    height: 14px;
    padding: 0 2px;
    background: #4a5464;
  }
  .combo .ico {
    width: 12px;
    height: 12px;
  }
  .combo select {
    flex: 1;
    min-width: 0;
    appearance: none;
    padding-left: 1px;
  }
  .combo .weight,
  .combo .ltype {
    flex: none;
    width: 36px;
  }
  .sample {
    flex: 1;
    height: 1px;
    background: #c0c6ce;
  }
  .layerbox {
    display: flex;
    flex-direction: column;
    padding-left: 2px;
  }
  .layerbox .combo {
    flex: none;
    padding-right: 3px;
  }
  .layergrid {
    display: grid;
    grid-template: repeat(2, 16px) / repeat(5, 16px);
    margin-top: 2px;
  }
  .rows {
    display: grid;
    grid-template-rows: repeat(3, 16px);
  }
  .row {
    display: flex;
    align-items: center;
    gap: 3px;
  }

  .slash {
    width: 1px;
    height: 10px;
    background: #47515f;
    transform: skewX(-22deg);
  }
  .files,
  .layouts {
    display: flex;
    align-items: center;
  }
  .files {
    height: 19px;
    border-bottom: 1px solid #4a5260;
  }
  .files button,
  .layouts button {
    align-self: stretch;
    padding: 0 7px;
  }
  .files .menu,
  .layouts .menu {
    padding: 0 6px 0 2px;
  }
  .current {
    gap: 2px;
    background: var(--panel);
    color: #fff;
    font-weight: 700;
    clip-path: polygon(6px 0, 100% 0, calc(100% - 6px) 100%, 0 100%);
  }
  .files .current {
    padding: 0 4px 0 9px;
  }
  .files .add {
    padding: 0 5px 0 3px;
  }

  .canvas {
    position: relative;
    flex: 1;
    background: #b2b2b2;
    overflow: hidden;
  }
  .model {
    display: block;
    width: 100%;
    font: 24px 'Liberation Sans', Arial, sans-serif;
  }
  .vplabel {
    position: absolute;
    top: 4px;
    left: 0;
    color: #262626;
  }
  .vpbuttons {
    position: absolute;
    top: 4px;
    right: -4px;
    display: flex;
  }
  .vpbuttons .ico {
    width: 13px;
    height: 13px;
  }
  .navbar {
    position: absolute;
    top: 17px;
    right: -8px;
    border: 1px solid #929292;
    background: #bcbcbc;
  }
  .navbar svg {
    display: block;
    width: 22px;
    height: 154px;
  }

  .command {
    display: flex;
    border-top: 3px solid #3e4855;
    background: #2a3240;
    color: #222;
    font: 8px/10px 'DejaVu Sans Mono', monospace;
  }
  .handle {
    display: flex;
    flex-direction: column;
    justify-content: space-between;
    width: 9px;
    overflow: hidden;
  }
  .handle .ico {
    width: 11px;
    height: 11px;
    margin-left: -4px;
  }
  .console {
    flex: 1;
  }
  .history {
    padding: 0 2px;
    border-bottom: 1px solid #8c8c8c;
    background: #c8c8c8;
  }
  .history p {
    margin: 0;
  }
  .entry {
    display: flex;
    align-items: center;
    height: 13px;
    padding-left: 2px;
    background: #fff;
  }
  .entry input {
    flex: 1;
    margin-left: 3px;
  }
  .entry input::placeholder {
    color: #777;
    font-style: italic;
    opacity: 1;
  }

  .status {
    display: flex;
    justify-content: space-between;
    height: 22px;
    border-top: 1px solid #3e4855;
  }
  .layouts .current {
    padding: 0 9px;
  }
  .modes {
    display: flex;
    align-items: center;
    height: 16px;
    margin-top: 3px;
    background: #343d4b;
  }
  .modes .ico {
    width: 12px;
    height: 12px;
  }
  .space {
    width: 32px;
  }
  .mode {
    width: 16px;
    height: 16px;
  }
  .mode.on {
    background: #4f83bb;
  }
  .open {
    display: flex;
    justify-content: center;
    width: 11px;
  }
  .ratio {
    gap: 3px;
    width: 24px;
  }
  .wide {
    width: 20px;
  }
  .end {
    width: 9px;
  }
</style>
